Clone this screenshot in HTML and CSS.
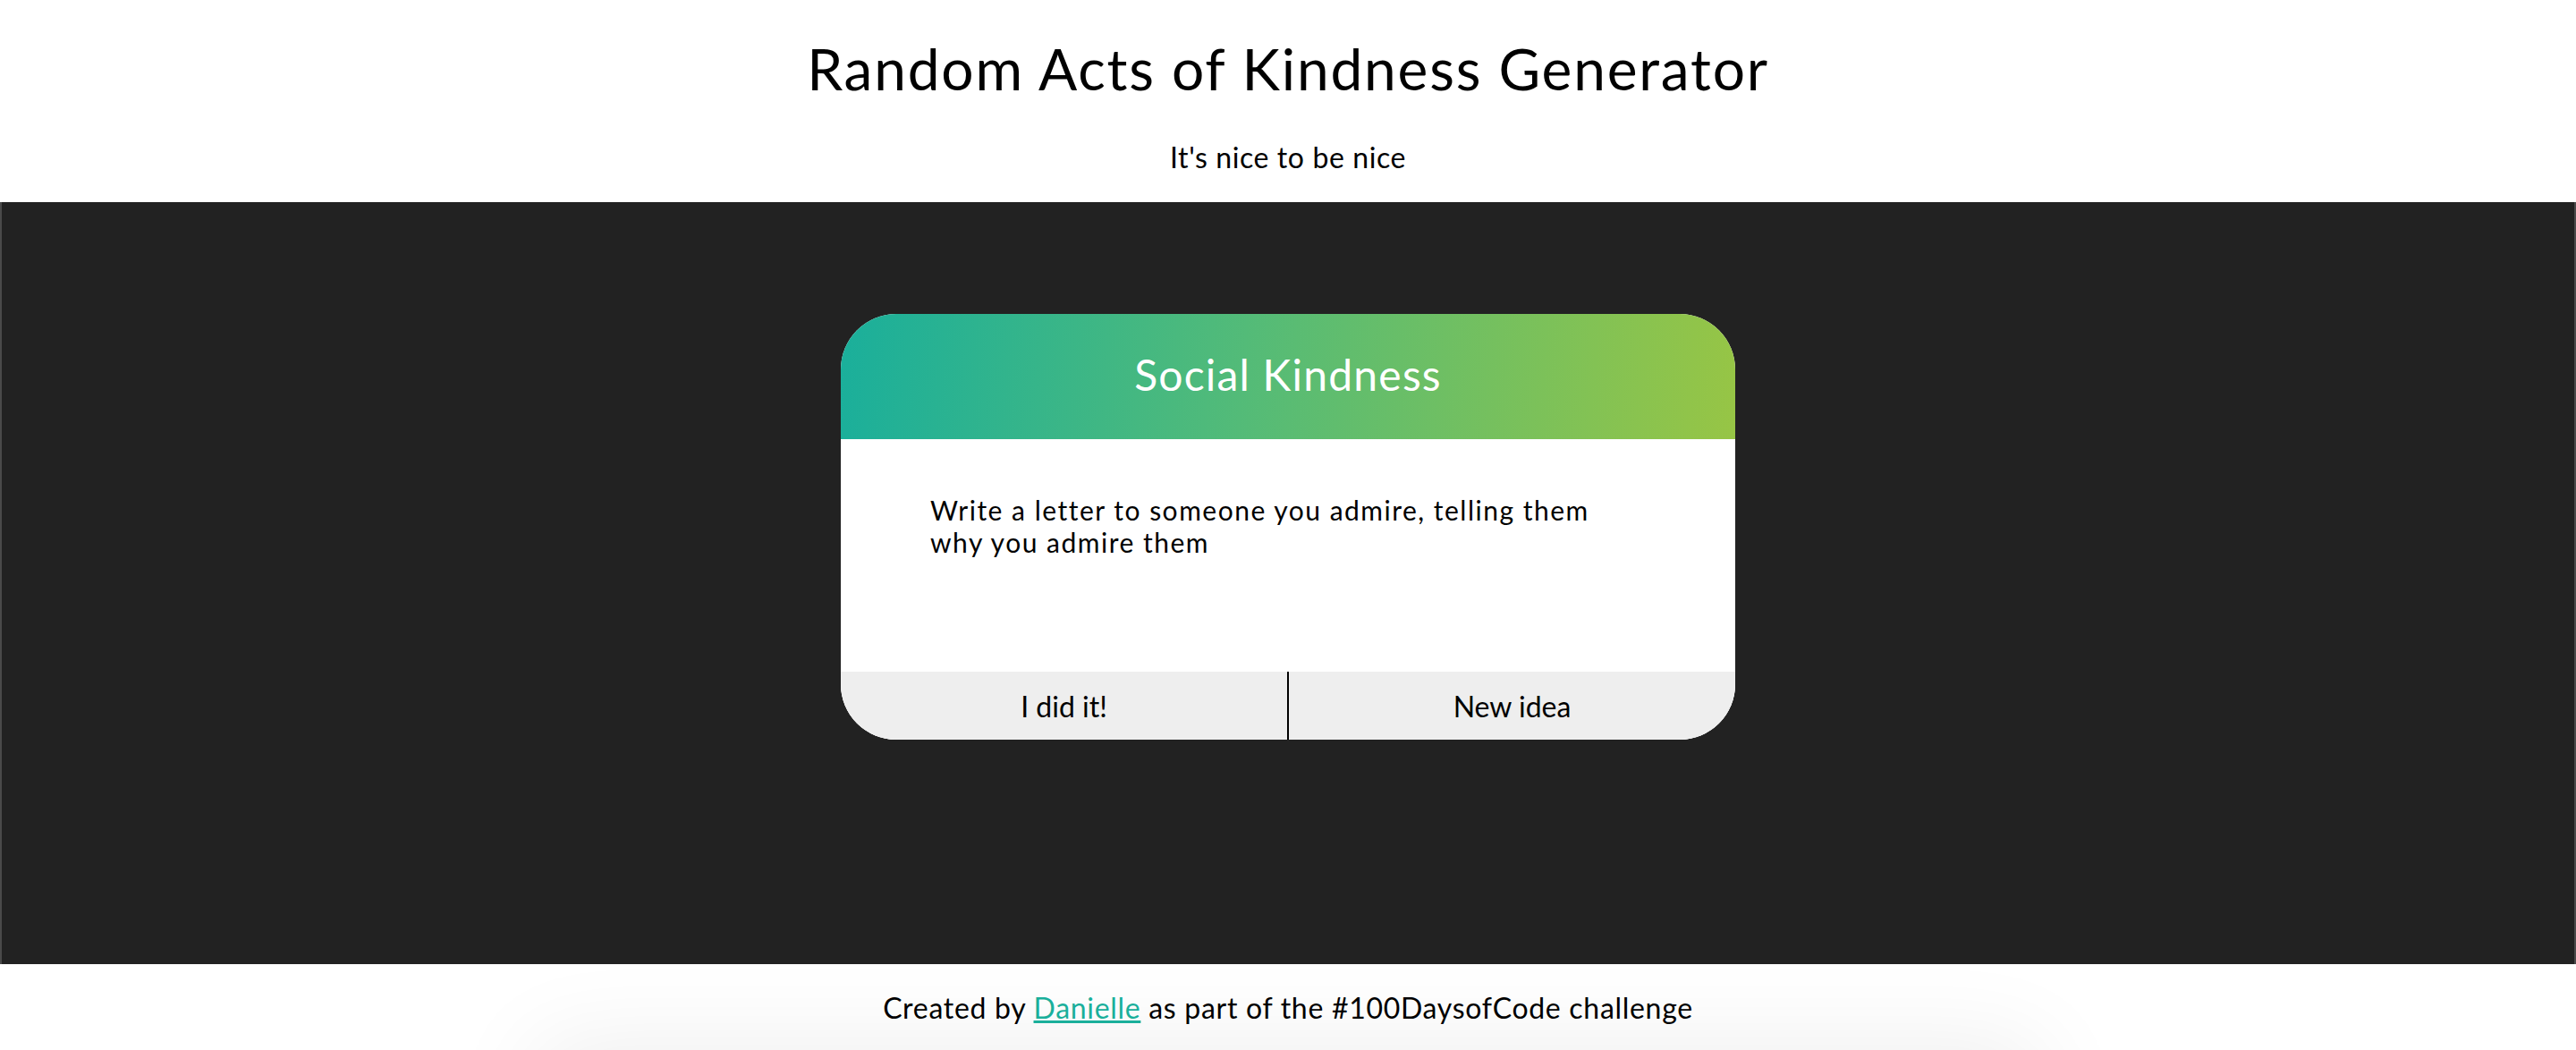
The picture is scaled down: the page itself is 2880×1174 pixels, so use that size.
FILE: index.html
```html
<!DOCTYPE html>
<html lang="en">
<head>
<meta charset="utf-8">
<title>Random Acts of Kindness Generator</title>
<link rel="stylesheet" href="styles.css">
</head>
<body>
<header class="top">
  <h1 class="title">Random Acts of Kindness Generator</h1>
  <p class="tagline">It's nice to be nice</p>
</header>
<main class="stage">
  <section class="card">
    <h2 class="card-head">Social Kindness</h2>
    <div class="card-body">
      <p class="idea">Write a letter to someone you admire, telling them why you admire them</p>
    </div>
    <div class="card-actions">
      <button class="btn">I did it!</button>
      <button class="btn btn-right">New idea</button>
    </div>
  </section>
</main>
<footer class="foot">
  <p class="credit">Created by <a href="#" class="link">Danielle</a> as part of the #100DaysofCode challenge</p>
</footer>
</body>
</html>
```
FILE: styles.css
```css
* { box-sizing: border-box; }
html, body { margin: 0; padding: 0; }
body {
  font-family: Lato, "Noto Sans", "Liberation Sans", sans-serif;
  color: #000;
  background: #fff;
  height: 1174px;
  overflow: hidden;
  display: flex;
  flex-direction: column;
}
.top {
  height: 226px;
  padding-top: 37px;
  display: flex;
  flex-direction: column;
  align-items: center;
}
.title {
  margin: 0;
  font-size: 64px;
  line-height: 80px;
  font-weight: 400;
  letter-spacing: 1.8px;
}
.tagline {
  margin: 39px 0 0;
  font-size: 32px;
  line-height: 40px;
  letter-spacing: 0.6px;
}
.stage {
  height: 852px;
  background: #222222;
  border-left: 2px solid #4a4a4a;
  border-right: 2px solid #4a4a4a;
  display: flex;
  justify-content: center;
  padding-top: 125px;
}
.card {
  width: 1000px;
  height: 476px;
  border-radius: 62px;
  overflow: hidden;
  background: #fff;
  display: flex;
  flex-direction: column;
}
.card-head {
  margin: 0;
  height: 140px;
  display: flex;
  align-items: center;
  justify-content: center;
  padding-bottom: 5px;
  font-size: 48px;
  font-weight: 400;
  letter-spacing: 1.2px;
  color: #fff;
  background: linear-gradient(95deg, #1aaf9b 0%, #53bb78 45%, #97c545 100%);
}
.card-body {
  height: 260px;
  padding: 61px 100px 0;
}
.idea {
  margin: 0;
  font-size: 30px;
  line-height: 36px;
  letter-spacing: 1.5px;
}
.card-actions {
  height: 76px;
  display: flex;
  background: #eeeeee;
}
.btn {
  flex: 1;
  border: 0;
  background: #eeeeee;
  font-family: inherit;
  font-size: 32px;
  color: #000;
  padding: 0;
}
.btn-right {
  border-left: 2px solid #000;
}
.foot {
  position: relative;
  height: 96px;
  overflow: hidden;
  display: flex;
  justify-content: center;
  align-items: center;
  padding-top: 2px;
}
.foot::before {
  content: "";
  position: absolute;
  left: 640px;
  right: 640px;
  top: 130px;
  height: 200px;
  background: #eee;
  box-shadow: 0 0 110px 40px rgba(0, 0, 0, 0.07);
}
.credit {
  position: relative;
  margin: 0;
  font-size: 32px;
  line-height: 40px;
  letter-spacing: 0.7px;
}
.link {
  color: #1aaf9b;
}
```
